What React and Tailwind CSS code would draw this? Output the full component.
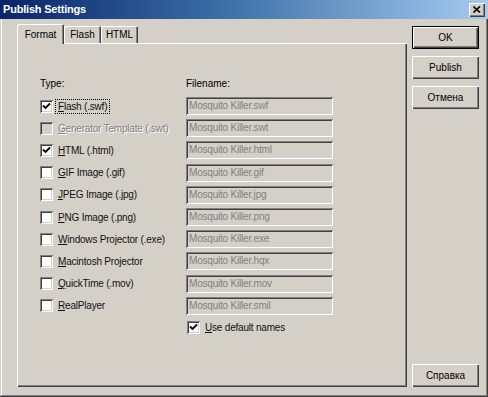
import React from "react";

const font = { fontFamily: '"Liberation Sans", Arial, sans-serif' };

function Check({ checked, disabled }) {
  return (
    <div className={`w-[13px] h-[13px] shrink-0 relative shadow-[inset_1px_1px_#808080,inset_-1px_-1px_#ffffff,inset_2px_2px_#404040,inset_-2px_-2px_#d4d0c8] ${disabled ? "bg-[#d4d0c8]" : "bg-white"}`}>
      {checked && (
        <svg className="absolute left-[2px] top-[2px]" width="9" height="9" viewBox="0 0 9 9">
          <path d="M1 3.5 L3.5 6 L8 1.5" stroke={disabled ? "#808080" : "#000"} strokeWidth="1.8" fill="none" />
        </svg>
      )}
    </div>
  );
}

function Label({ text, u, disabled, focus }) {
  const before = text.slice(0, u);
  const ch = text[u];
  const after = text.slice(u + 1);
  return (
    <span
      className={`px-[2px] leading-[13px] whitespace-nowrap tracking-[-0.2px] ${focus ? "outline outline-1 outline-dotted outline-black" : ""} ${disabled ? "text-[#808080] [text-shadow:1px_1px_#ffffff]" : "text-[#111]"}`}
    >
      {before}
      <span className="underline">{ch}</span>
      {after}
    </span>
  );
}

function Field({ value }) {
  return (
    <div className="w-[147px] h-[18px] bg-[#d4d0c8] shadow-[inset_1px_1px_#808080,inset_-1px_-1px_#ffffff,inset_2px_2px_#404040,inset_-2px_-2px_#d4d0c8] flex items-center pl-[3px] text-[#808080] leading-none tracking-[-0.2px]">
      {value}
    </div>
  );
}

function Button({ children, def }) {
  return (
    <div
      className={`w-[67px] h-[23px] flex items-center justify-center text-black bg-[#d4d0c8] ${
        def
          ? "shadow-[inset_1px_1px_#000000,inset_-1px_-1px_#000000,inset_2px_2px_#ffffff,inset_-2px_-2px_#404040,inset_-3px_-3px_#808080]"
          : "shadow-[inset_1px_1px_#ffffff,inset_-1px_-1px_#404040,inset_-2px_-2px_#808080]"
      }`}
    >
      {children}
    </div>
  );
}

const rows = [
  { t: "Flash (.swf)", u: 0, c: true, f: "Mosquito Killer.swf", focus: true },
  { t: "Generator Template (.swt)", u: 0, c: false, f: "Mosquito Killer.swt", d: true },
  { t: "HTML (.html)", u: 0, c: true, f: "Mosquito Killer.html" },
  { t: "GIF Image (.gif)", u: 0, c: false, f: "Mosquito Killer.gif" },
  { t: "JPEG Image (.jpg)", u: 0, c: false, f: "Mosquito Killer.jpg" },
  { t: "PNG Image (.png)", u: 0, c: false, f: "Mosquito Killer.png" },
  { t: "Windows Projector (.exe)", u: 0, c: false, f: "Mosquito Killer.exe" },
  { t: "Macintosh Projector", u: 0, c: false, f: "Mosquito Killer.hqx" },
  { t: "QuickTime (.mov)", u: 0, c: false, f: "Mosquito Killer.mov" },
  { t: "RealPlayer", u: 0, c: false, f: "Mosquito Killer.smil" },
];

export default function App() {
  return (
    <div
      style={font}
      className="w-[488px] h-[397px] bg-[#d4d0c8] text-[10px] flex flex-col p-[2px] pt-0 shadow-[inset_-1px_-1px_#404040,inset_1px_1px_#d4d0c8,inset_-2px_-2px_#808080,inset_2px_2px_#ffffff] overflow-hidden"
    >
      {/* title bar */}
      <div className="h-[19px] -mx-[2px] flex items-center justify-between bg-[linear-gradient(to_right,#0a246a_0%,#3a6ea5_45%,#a6caf0_100%)] pl-[3px] pr-[3px]">
        <span className="text-white font-bold text-[11px] leading-none tracking-[-0.2px]">Publish Settings</span>
        <div className="w-[16px] h-[14px] bg-[#d4d0c8] flex items-center justify-center shadow-[inset_1px_1px_#ffffff,inset_-1px_-1px_#404040,inset_-2px_-2px_#808080]">
          <svg width="8" height="7" viewBox="0 0 8 7">
            <path d="M0.5 0.5 L7 6.5 M7 0.5 L0.5 6.5" stroke="#000" strokeWidth="1.6" />
          </svg>
        </div>
      </div>

      <div className="flex flex-1 pl-[15px] pt-[5px]">
        {/* tab control */}
        <div className="w-[390px] flex flex-col">
          <div className="flex items-end h-[19px] pl-[2px] relative z-10">
            <div className="h-[20px] -mb-[1px] bg-[#d4d0c8] flex items-center justify-center shadow-[inset_1px_1px_#ffffff,inset_-1px_0_#404040,inset_-2px_0_#808080] rounded-t-[2px] -ml-[2px] w-[47px]">
              Format
            </div>
            <div className="w-[37px] h-[17px] bg-[#d4d0c8] flex items-center justify-center shadow-[inset_1px_1px_#ffffff,inset_-1px_0_#404040,inset_-2px_0_#808080] rounded-t-[2px]">
              Flash
            </div>
            <div className="w-[37px] h-[17px] bg-[#d4d0c8] flex items-center justify-center shadow-[inset_1px_1px_#ffffff,inset_-1px_0_#404040,inset_-2px_0_#808080] rounded-t-[2px]">
              HTML
            </div>
          </div>
          <div className="h-[344px] shadow-[inset_1px_1px_#ffffff,inset_-1px_-1px_#404040,inset_-2px_-2px_#808080] pl-[23px] pt-[34px]">
            <div className="flex">
              <div className="w-[146px] flex flex-col">
                <div className="h-[14px] leading-[14px]">Type:</div>
                <div className="h-[4px]" />
                {rows.map((r, i) => (
                  <div key={i} className="h-[22.2px] flex items-center gap-[3px]">
                    <Check checked={r.c} disabled={r.d} />
                    <Label text={r.t} u={r.u} disabled={r.d} focus={r.focus} />
                  </div>
                ))}
              </div>
              <div className="flex flex-col">
                <div className="h-[14px] leading-[14px]">Filename:</div>
                <div className="h-[4px]" />
                {rows.map((r, i) => (
                  <div key={i} className="h-[22.2px] flex items-center">
                    <Field value={r.f} />
                  </div>
                ))}
                <div className="h-[22px] flex items-center gap-[3px] pl-[1px]">
                  <Check checked />
                  <Label text="Use default names" u={0} />
                </div>
              </div>
            </div>
          </div>
        </div>

        {/* buttons */}
        <div className="flex flex-col ml-[5px] pt-[2px] pb-[8px]">
          <div className="flex flex-col gap-[7px]">
            <Button def>OK</Button>
            <Button>Publish</Button>
            <Button>Отмена</Button>
          </div>
          <div className="flex-1" />
          <Button>Справка</Button>
        </div>
      </div>
    </div>
  );
}
